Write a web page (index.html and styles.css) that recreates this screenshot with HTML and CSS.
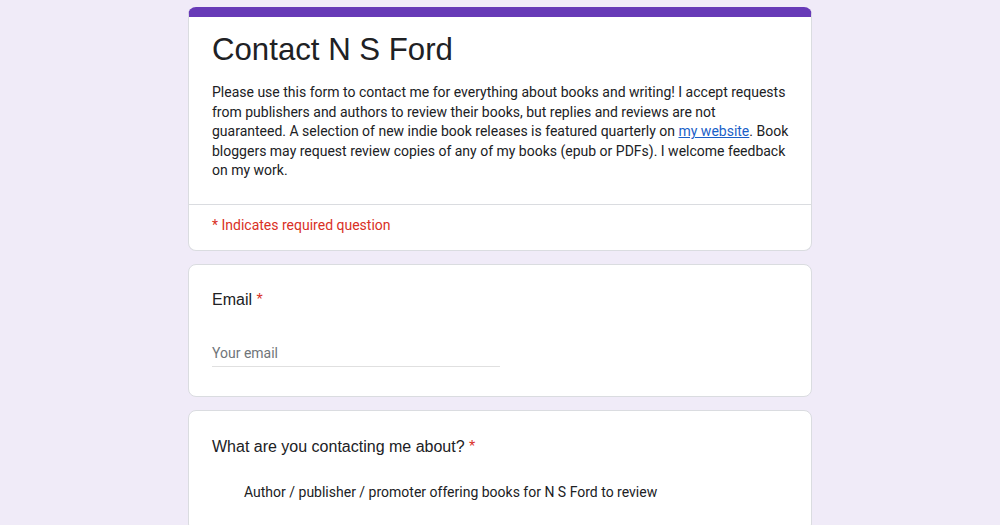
FILE: index.html
```html
<!DOCTYPE html>
<html lang="en">
<head>
<meta charset="utf-8">
<title>Contact N S Ford</title>
<link rel="stylesheet" href="styles.css">
</head>
<body>
<main class="form">
  <section class="card header-card">
    <div class="header-main">
      <h1 class="form-title">Contact N S Ford</h1>
      <p class="form-desc">Please use this form to contact me for everything about books and writing! I accept requests from publishers and authors to review their books, but replies and reviews are not guaranteed. A selection of new indie book releases is featured quarterly on <a href="#" class="link">my website</a>. Book bloggers may request review copies of any of my books (epub or PDFs). I welcome feedback on my work.</p>
    </div>
    <div class="required-note">* Indicates required question</div>
  </section>

  <section class="card question-card">
    <div class="q-title">Email <span class="req">*</span></div>
    <div class="text-input">Your email</div>
  </section>

  <section class="card question-card choice-card">
    <div class="q-title">What are you contacting me about? <span class="req">*</span></div>
    <div class="option">Author / publisher / promoter offering books for N S Ford to review</div>
  </section>
</main>
</body>
</html>
```

FILE: styles.css
```css
* { box-sizing: border-box; }
html, body { margin: 0; padding: 0; }
body {
  background: #f0ebf8;
  font-family: Roboto, "Liberation Sans", Arial, sans-serif;
  color: #202124;
}
.form {
  width: 624px;
  margin: 7px auto 0;
  display: flex;
  flex-direction: column;
  gap: 13px;
}
.card {
  background: #ffffff;
  border: 1px solid #dadce0;
  border-radius: 8px;
}
.header-card {
  border-top: 10px solid #673ab7;
}
.header-main {
  padding: 13px 20px 23px 23px;
  border-bottom: 1px solid #dadce0;
}
.form-title {
  margin: 0;
  font-family: "Liberation Sans", Arial, sans-serif;
  font-weight: 400;
  font-size: 31.2px;
  line-height: 40px;
  color: #202124;
}
.form-desc {
  margin: 13px 0 0;
  font-size: 14px;
  line-height: 19.5px;
  color: #202124;
}
.link { color: #1a5fc8; text-decoration: underline; }
.required-note {
  padding: 10px 24px 15px 23px;
  font-size: 14px;
  line-height: 20px;
  color: #d93025;
}
.question-card {
  padding: 23px 24px 29px 23px;
}
.choice-card {
  padding-top: 24px;
}
.q-title {
  font-family: "Liberation Sans", Arial, sans-serif;
  font-size: 16px;
  line-height: 24px;
  color: #202124;
}
.req { color: #d93025; }
.text-input {
  width: 288px;
  margin-top: 31px;
  padding-bottom: 3px;
  border-bottom: 1px solid #e0e0e0;
  font-size: 14px;
  line-height: 20px;
  color: #70757a;
}
.option {
  margin-top: 23px;
  padding-left: 32px;
  font-size: 14px;
  line-height: 20px;
  color: #202124;
}
```
